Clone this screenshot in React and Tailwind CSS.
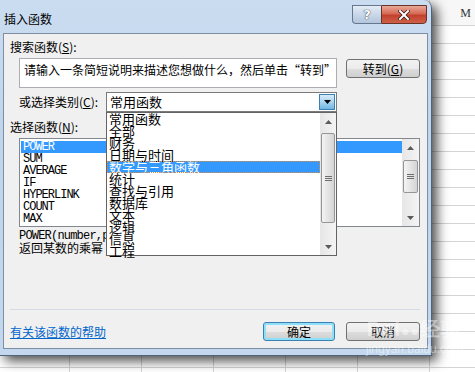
// App.jsx
// Excel "插入函数" dialog over a spreadsheet, with the category dropdown open

import React from 'react';

const categories = [
  '常用函数',
  '全部',
  '财务',
  '日期与时间',
  '数学与三角函数',
  '统计',
  '查找与引用',
  '数据库',
  '文本',
  '逻辑',
  '信息',
  '工程',
];

const functions = ['POWER', 'SUM', 'AVERAGE', 'IF', 'HYPERLINK', 'COUNT', 'MAX'];

const btn =
  'flex items-center justify-center rounded-[3px] text-[12px] leading-[14px] text-black bg-[linear-gradient(#f2f2f2,#ebebeb_50%,#dddddd_51%,#cfcfcf)]';

const UpArrow = () => (
  <svg width="7" height="4" viewBox="0 0 7 4">
    <path d="M0 4 L3.5 0 L7 4 Z" fill="#5a5a5a" />
  </svg>
);

const DownArrow = ({ color = '#5a5a5a' }) => (
  <svg width="7" height="4" viewBox="0 0 7 4">
    <path d="M0 0 L7 0 L3.5 4 Z" fill={color} />
  </svg>
);

const Grip = () => (
  <div className="flex flex-col gap-[1px]">
    <div className="w-[7px] h-px bg-[#6e6e6e]" />
    <div className="w-[7px] h-px bg-[#6e6e6e]" />
    <div className="w-[7px] h-px bg-[#6e6e6e]" />
  </div>
);

// vertical scrollbar: up arrow, track with thumb, down arrow
const ScrollBar = ({ thumbTop, thumbHeight, width }) => (
  <div
    className="h-full flex flex-col items-center bg-[linear-gradient(90deg,#e6e6e6,#f4f4f4)]"
    style={{ width }}
  >
    <div className="h-[17px] flex items-center justify-center">
      <UpArrow />
    </div>
    <div className="flex-1 w-full flex flex-col items-center">
      <div
        className="w-[calc(100%-2px)] rounded-[2px] border border-[#959595] bg-[linear-gradient(90deg,#f4f4f4,#d4d4d4)] flex items-center justify-center"
        style={{ marginTop: thumbTop, height: thumbHeight }}
      >
        <Grip />
      </div>
    </div>
    <div className="h-[17px] flex items-center justify-center">
      <DownArrow />
    </div>
  </div>
);

const Spreadsheet = () => (
  <div className="w-[475px] h-[372px] bg-white overflow-hidden">
    <div className="h-[26px] flex -ml-[2px] border-b border-[#d4d4d4] bg-[#f7f7f7]">
      {Array.from({ length: 8 }).map((_, i) => (
        <div
          key={i}
          className="w-[72px] shrink-0 h-full border-r border-[#cfcfcf] flex items-center justify-center text-[12px] text-[#333] font-['Liberation_Serif',serif]"
        >
          {i === 6 ? 'M' : ''}
        </div>
      ))}
    </div>
    {Array.from({ length: 20 }).map((_, r) => (
      <div key={r} className="h-[18px] flex -ml-[2px] border-b border-[#d4d4d4]">
        {Array.from({ length: 8 }).map((_, i) => (
          <div key={i} className="w-[72px] shrink-0 h-full border-r border-[#d4d4d4]" />
        ))}
      </div>
    ))}
  </div>
);

const App = () => {
  return (
    <div className="relative w-[475px] h-[372px] overflow-hidden font-['Noto_Sans_CJK_SC','Noto_Sans',sans-serif] text-black">
      <Spreadsheet />

      {/* Dialog window */}
      <div className="absolute left-0 top-0 w-[432px] h-[356px] flex flex-col rounded-tr-[8px] border-r border-b border-[#50637a] bg-[linear-gradient(#cadcf0,#bfd5ec_40%,#c3d8ee)] shadow-[5px_5px_12px_rgba(0,0,0,0.7)]">
        {/* Title bar */}
        <div className="h-[33px] shrink-0 flex items-start">
          <span className="mt-[12px] ml-[4px] text-[12px] leading-[14px]">插入函数</span>
          <div className="ml-auto mr-[4px] mt-[5px] flex">
            <div className="w-[29px] h-[19px] rounded-bl-[4px] border border-[#65788f] border-r-0 bg-[linear-gradient(#e4ecf5,#c9d7e8_50%,#b3c6dd)] flex items-center justify-center">
              <span className="text-[13px] leading-[13px] font-bold text-white [text-shadow:0_0_1px_#2b3a4d,0_0_1px_#2b3a4d] font-['DejaVu_Sans',sans-serif]">
                ?
              </span>
            </div>
            <div className="w-[46px] h-[19px] rounded-br-[4px] border border-[#6a3329] bg-[linear-gradient(#e9a898,#d56a55_45%,#c2412d_55%,#cf6048)] flex items-center justify-center">
              <svg width="12" height="10" viewBox="0 0 12 10">
                <path d="M2 1 L10 9 M10 1 L2 9" stroke="#3b1d18" strokeWidth="3.6" strokeLinecap="square" />
                <path d="M2 1 L10 9 M10 1 L2 9" stroke="#ffffff" strokeWidth="2" strokeLinecap="square" />
              </svg>
            </div>
          </div>
        </div>

        {/* Client area */}
        <div className="flex pl-[3px] pr-[3px]">
          <div className="relative w-[425px] h-[316px] bg-[#f0f0f0] shadow-[inset_0_0_0_1px_#7f8fa3] flex flex-col text-[12px] leading-[14px]">
            <div className="mt-[7px] ml-[7px] h-[14px]">
              搜索函数(<u>S</u>):
            </div>

            <div className="mt-[4px] ml-[16px] flex items-start">
              <div className="w-[318px] h-[30px] bg-white border border-[#abadb3] pl-[4px] pt-[4px] whitespace-nowrap overflow-hidden">
                请输入一条简短说明来描述您想做什么，然后单击“转到”
              </div>
              <div className={`${btn} ml-[9px] mt-[1px] w-[74px] h-[19px] border border-[#707070]`}>
                转到(<u>G</u>)
              </div>
            </div>

            <div className="mt-[4px] ml-[16px] h-[20px] flex items-center">
              <span className="w-[87px]">
                或选择类别(<u>C</u>):
              </span>
              <div className="w-[231px] h-[20px] bg-white border border-[#7a7a7a] flex items-center">
                <span className="ml-[3px] text-[13px]">常用函数</span>
                <div className="ml-auto mr-px w-[16px] h-[16px] border border-[#3c7fb1] bg-[linear-gradient(#d7ecf9,#a9d4f1_50%,#6fb5e3)] flex items-center justify-center">
                  <DownArrow color="#000000" />
                </div>
              </div>
            </div>

            <div className="mt-[8px] ml-[7px] h-[14px]">
              选择函数(<u>N</u>):
            </div>

            <div className="mt-[4px] ml-[16px] w-[401px] h-[89px] bg-white border border-[#828790] flex">
              <div className="flex-1 pt-[2px] pl-px font-['Liberation_Mono',monospace] text-[12px] tracking-[-1px]">
                {functions.map((f, i) => (
                  <div
                    key={f}
                    className={`h-[12px] leading-[12px] pl-[2px] ${i === 0 ? 'bg-[#3399ff] text-white' : ''}`}
                  >
                    {f}
                  </div>
                ))}
              </div>
              <ScrollBar thumbTop={4} thumbHeight={33} width={17} />
            </div>

            <div className="mt-[3px] ml-[16px] h-[12px] leading-[12px] font-['Liberation_Mono',monospace] text-[12px] tracking-[-0.8px]">
              POWER(number,power)
            </div>
            <div className="ml-[16px] h-[12px] leading-[12px]">返回某数的乘幂</div>

            <div className="mt-[55px] ml-[7px] mr-[8px] h-px bg-[#d3dce4]" />

            <div className="mt-[12px] h-[19px] flex items-center">
              <span className="ml-[7px] text-[#0066cc] underline">有关该函数的帮助</span>
              <div className={`${btn} ml-auto w-[72px] h-[19px] border border-[#3c7fb1] shadow-[inset_0_0_0_2px_#8ee0fa]`}>
                确定
              </div>
              <div className={`${btn} ml-[11px] mr-[8px] w-[74px] h-[19px] border border-[#707070]`}>
                取消
              </div>
            </div>

            {/* Open category dropdown */}
            <div className="absolute left-[103px] top-[79px] w-[231px] h-[144px] bg-white border border-[#646464] flex">
              <div className="flex-1 text-[13px]">
                {categories.map((c, i) => (
                  <div
                    key={c}
                    className={`h-[12px] leading-[12px] pl-[2px] whitespace-nowrap ${
                      i === 4
                        ? 'bg-[#3399ff] text-white outline-1 outline-dotted outline-[#e08a3c] -outline-offset-1'
                        : ''
                    }`}
                  >
                    {c}
                  </div>
                ))}
              </div>
              <ScrollBar thumbTop={3} thumbHeight={90} width={16} />
            </div>
          </div>
        </div>
      </div>

      {/* Watermark */}
      <div className="absolute left-[366px] top-[318px] flex flex-col items-center text-white/45 pointer-events-none">
        <span className="text-[20px] leading-[22px] font-bold font-['Liberation_Sans',sans-serif] tracking-[1px]">
          Bai<span className="text-[14px]">●●</span>经验
        </span>
        <span className="text-[12px] leading-[14px] font-['Liberation_Sans',sans-serif]">jingyan.baidu.com</span>
      </div>
    </div>
  );
};

export default App;
